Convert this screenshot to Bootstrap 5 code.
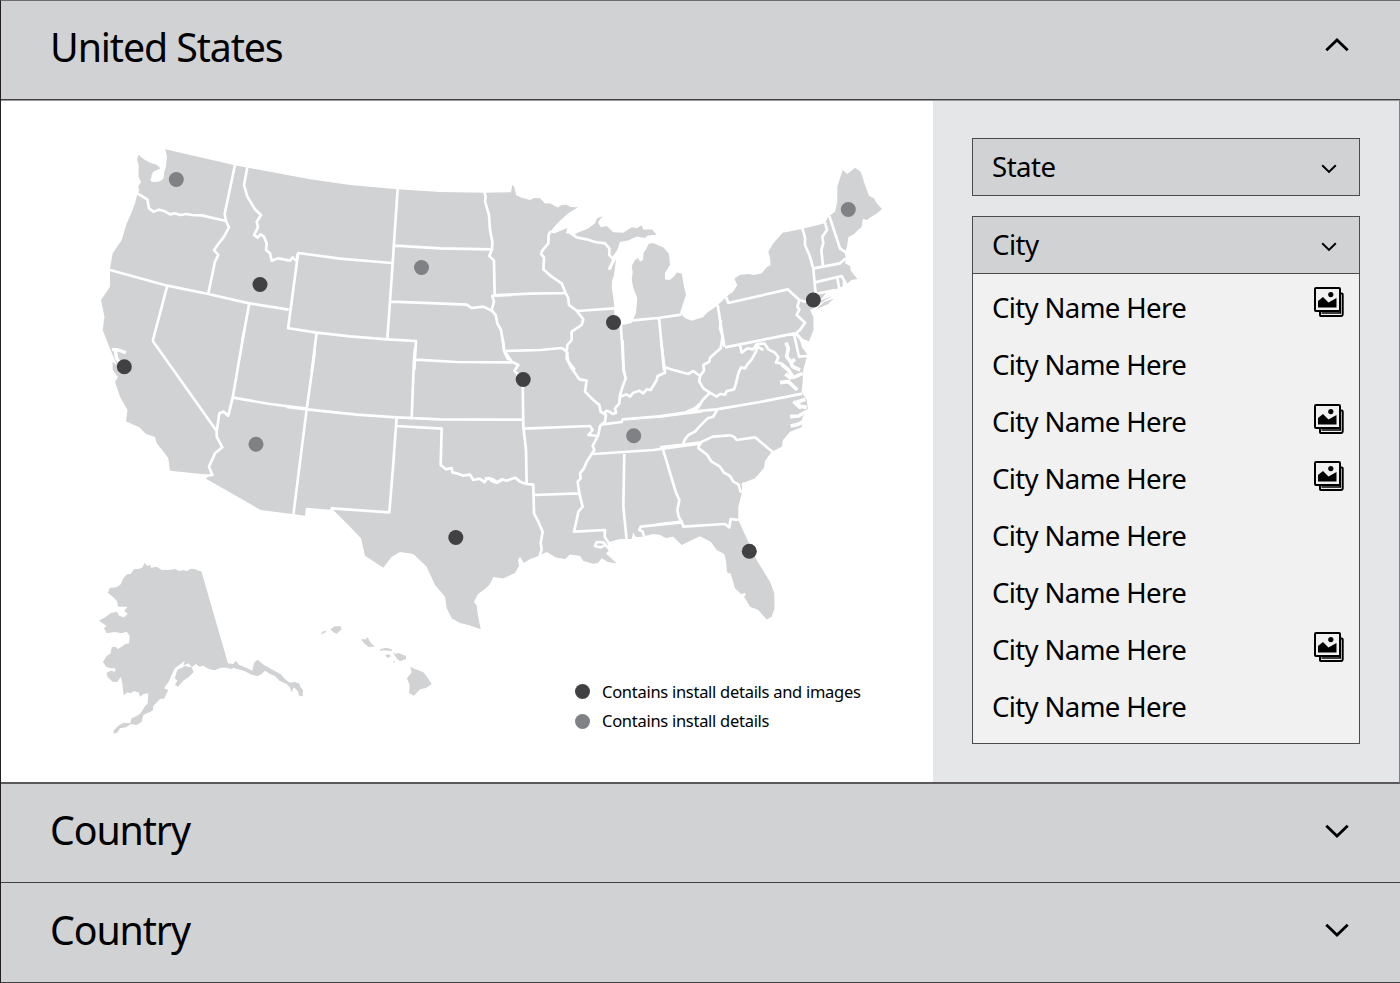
<!DOCTYPE html>
<html lang="en">
<head>
<meta charset="utf-8">
<meta name="viewport" content="width=device-width, initial-scale=1">
<title>Install locations</title>
<link href="https://cdn.jsdelivr.net/npm/bootstrap@5.3.0/dist/css/bootstrap.min.css" rel="stylesheet">
<style>
  body { font-family: "Noto Sans", "Open Sans", sans-serif; color: #000; background: #fff; }
  .locations { width: 1400px; height: 983px; border-left: 1px solid #231f20; border-top: 1px solid #6d6c6f; overflow: hidden; }
  .country-bar { background: #d1d2d4; height: 99px; padding: 0 51px 4px 49px; border: 0; border-bottom: 1px solid #414042; color: #000; text-align: left; flex: none; }
  .country-bar:last-child { height: 100px; }
  .country-bar.open-bar { padding-bottom: 5px; }
  .country-bar svg { margin-top: -1px; }
  .country-bar.open-bar svg { margin-top: -5px; }
  .country-name { font-size: 39.3px; letter-spacing: -1.1px; line-height: 1; }
  .detail { height: 684px; border-top: 1px solid #9a999c; border-bottom: 2px solid #5b595c; border-right: 1px solid #808184; }
  .map-pane { width: 932px; flex: none; }
  .legend { left: 574px; top: 576px; font-size: 16.5px; letter-spacing: -.28px; line-height: 29.4px; }
  .dot { width: 15px; height: 15px; border-radius: 50%; margin-right: 12px; }
  .dot-full { background: #414042; }
  .dot-part { background: #808184; }
  .side { background: #e5e6e8; padding: 37px 39px 0 39px; }
  .pick { background: #d1d2d4; border: 1px solid #4d4b4e; height: 58px; padding: 0 22px 0 19px; font-size: 27.6px; letter-spacing: -.5px; line-height: 1; color: #000; }
  .pick svg { margin-top: 4px; }
  .pick-state { margin-bottom: 20px; }
  .cities { background: #f1f1f2; border: 1px solid #4d4b4e; border-top: 0; height: 470px; padding: 5px 14px 0 19px; font-size: 27.6px; letter-spacing: -.65px; line-height: 1; }
  .cities li { height: 57px; }
  .cities svg { margin-top: -5px; }
  .cities li:first-child svg { margin-top: -10px; }
</style>
</head>
<body>
<svg class="d-none">
  <symbol id="photos" viewBox="0 0 31 31">
    <path d="M6 25V28.3Q6 29 6.7 29H27.300Q28.700 29 28.700 27.600V7.500Q28.700 6.500 27.700 6.500H26" fill="none" stroke="#000" stroke-width="2"/>
    <path d="M7.500 25.200H25.500V23H27V26.800H7.500Z" fill="#000"/>
    <rect x="1" y="1" width="25" height="23" rx="1" fill="#f1f1f2" stroke="#000" stroke-width="2"/>
    <path d="M4 20.500V14L9 10L14.500 15.500L22.500 11V20.500Z" fill="#000"/>
    <circle cx="16.800" cy="7.600" r="2.600" fill="#000"/>
  </symbol>
  <symbol id="chev" viewBox="0 0 24 14"><path d="M1.300 1.700L12 12L22.700 1.700" fill="none" stroke="#000" stroke-width="2.800"/></symbol>
  <symbol id="chev-s" viewBox="0 0 16 10"><path d="M1.200 1.300L8 7.900L14.800 1.300" fill="none" stroke="#000" stroke-width="2"/></symbol>
</svg>

<main class="locations d-flex flex-column">
  <button class="country-bar open-bar d-flex align-items-center justify-content-between">
    <span class="country-name">United States</span>
    <svg width="24" height="14" style="transform:rotate(180deg)"><use href="#chev"/></svg>
  </button>

  <section class="detail d-flex">
    <div class="map-pane position-relative">
      <svg class="d-block" width="931" height="681" viewBox="1 101 931 681">
        <!-- mainland -->
        <path fill="#d1d2d4" d="M138.500 154.500L141 157 145 160 151 163 157 165 160 168 163 167 159 171 154 172 153 175 150 180 154 182 160 181 163 179 164 173 166 166 167 157 165.300 149.300 235 165.300 310 179.300 350 185 397.700 189.300 440 192 485 192.700 511 192.300 512.300 184.700 514.300 187 516 195 521 197.500 530 200 534 198 540 198.300 545 203.500 550 203.300 557.700 207.500 562 205 566.700 204.700 571 207 578 207.300 568.300 213.300 560 220.700 555 226 550 232 554 233.500 560 231 567.300 228 566 233.300 575 234 580 231.700 588.300 228.500 595 223.300 597 218.500 602.700 216 598 222.300 600.700 227.300 606.700 226 613.300 232.300 623.300 232.700 631.700 227.300 637 228 641.700 225.300 643.300 229.500 652 229.500 656.700 234.700 648 235.500 645 238 636.700 236.500 628 240.500 620 241.700 617.300 250 613 256 611 262 607.500 269 610.500 270.500 616 259 614 275 612 281 611.700 288 613.300 297 614.300 307 614.300 317 623 325 631.700 323 636 313 637.300 298 633.300 288 631.700 280 632.700 272 631.700 266 635 260 638 258 640 261.500 643 260 643.500 253 646.700 248 648.500 244 653 243 663.500 247.500 669 254 670 265 665 273 665 279.500 669.500 280 673.500 277 677 272.500 681.700 273.500 684 286.700 686 295 683.300 303 680 313 685 318 691.700 320.700 703 317.300 707 312.700 716.700 306 728.300 295 733 292 737.300 285 734.300 278.500 740 275 748.300 274 754 275 761.700 273.300 766.700 267.300 770.700 265 770 258.300 768.300 251.700 773.300 243.300 782.700 232.700 801.700 229 825 223.300 828 217 835 211.700 837.300 201.700 837.300 186.700 842.700 170 847.300 174 855 167.700 860.700 171.700 865 185 869 195.700 874 198.300 876.700 203.300 882 209 876.700 213.500 870 217.700 867 220 863 219 861.500 227 857 231 854 234 848.300 237.300 847 246.700 844.700 253.300 846 258 845 263.300 850 266 851 270.700 854 275 857.500 279 851.700 280 846.700 284 840 287.700 827 292 822 298 833 294 829 298 820 303 816 307 810 310 813.300 316.700 813.500 330 809 341.500 801.700 338.300 797.500 334 800 341 806.700 351.700 806.700 356.700 803.300 370 802.700 381.700 801.700 391.700 806.700 400 808 410 802 418 801.700 427.300 790 431.700 783 440 781.700 446.700 771.700 451.700 765 461 764 468 755 478.300 748 481 742.300 483.300 741.700 493.300 738.300 506.700 738.300 520 748.300 541.700 756.700 560 770 581.700 774.300 593.300 774.500 608.300 771.700 616.700 766.700 619.500 758.300 610 750 606.700 745 598 740 593 735 588.300 731.700 576.700 727 572 726 560 724 554 716.700 550 711 542 700 536.300 692 540 681.700 545 673.300 536.700 666 538 660 535 653 534 641.700 536.700 636 537 633 532.500 631.700 539 620 539 610 541.700 606.700 546.700 609.300 550 606 553.500 611 558 616.700 563.500 608 562 601.700 558.300 598 563 593.300 563.700 583.300 561 580 556 570 554.500 565 559 556 557.500 546.700 552 538.300 556 530 559 524 563 520 557 518 560 519 566 515 573 503.300 578.500 493.300 577 490 584 485 589 478 594 474 602 477 606 477.500 613.300 480.700 629.300 470 625.500 460 623 451.700 618.300 446.700 608.300 445 596.700 435 585 426.700 566.700 413.300 554 400 552 391.700 556.700 383.300 567.700 365 555.700 361 538.300 350 526.700 333.300 510 306 507.700 305 515.700 290 513.700 260.700 510 206 478.700 209 474.700 170 470.700 168.300 458.300 163 451 156.700 443.300 155 437 146 434 139.300 427.300 132 424 126 421.300 127.500 410 120 396.700 115 381.700 118 377 112.700 370 112.500 362 117 365 114 358 109.300 347 102.700 330 104.500 317 101 300 110 286.700 110 268.300 112.700 253.300 121.700 240 126.700 223.300 131 214 135 203.300 137 195 139.500 190 138 187 141 182 138.500 176.700 138.700 165 137 160Z"/>
        <g fill="none" stroke="#fff" stroke-width="8" stroke-linejoin="round">
          <!-- northwest -->
          <g transform="translate(90 140) scale(.33333)">
            <path d="M218 72L214 88 192 99 188 108 200 114 188 122 208 120 217 112 215 92"/>
            <path d="M138 158L155 168 172 178 177 205 190 215 207 209 225 214 240 223 255 220 270 225 290 222 305 225 335 226 408 243M435 74L404 222 408 243 417 262 402 290 385 312 372 330 385 345 375 365 355 460M60 390L232 437 355 462 478 490 596 509M232 437L188 603M478 490L457 603M472 82L462 135 472 170 495 208 513 225 500 245 504 262 492 285 503 293 512 283 522 290 530 310 528 330 540 340 545 362 565 355 585 359 600 362 608 352 618 362M624 342L594 567"/>
          </g>
          <!-- northern plains -->
          <g transform="translate(290 170) scale(.33333)">
            <path d="M20 262L25 249 150 266 305 279M323 56L308 280 292 507M-9 474L80 488 180 499 292 508 378 513 373 600M80 488L65 605M315 227L450 235 606 238M302 395L440 400 530 404 545 414 580 410 605 422 617 435M583 66L587 80 585 95 597 135 600 180 607 215 606 238 598 258 612 272 614 375 607 378 612 395 605 420 617 435 622 460 633 480 638 510 643 545 655 570M376 569L500 576 665 577M612 376L665 375"/>
          </g>
          <!-- great lakes -->
          <g transform="translate(480 170) scale(.33333)">
            <path d="M44 376L150 371 257 369M212 183L206 195 205 220 188 240 183 252 192 262 190 298 215 320 245 340 257 369 265 385 267 405 290 422 310 448 305 465 275 485 275 510 262 525 260 545 265 575 285 600M270 188L290 202 320 208 345 216 375 220 388 235 388 255 397 265M290 423L404 415M78 543L180 540 245 534 260 545M422 460L432 610M450 452L535 444 603 434M537 444L552 600"/>
          </g>
          <!-- northeast -->
          <g transform="translate(680 150) scale(.33333)">
            <path d="M138 440L145 459 323 418 345 438 358 450 375 455 395 450M367 235L375 262 375 285 388 315 400 355 403 390 407 430M435 218L441 240 427 260 430 280 424 300 429 348M448 198L480 295 498 308M402 355L480 340 498 325M405 397L485 378 500 405M472 383L478 418M492 395V408M358 450L352 470 358 478 350 495 375 518 360 540 345 552M113 465L133 590M405 432L465 420"/>
            <path stroke-width="5" d="M408 455L462 432M405 482L450 462"/>
          </g>
          <!-- southwest -->
          <g transform="translate(90 330) scale(.33333)">
            <path d="M430 203L540 222 650 236M463 0L428 203 415 257 400 245 388 250 380 305 380 320 397 352 375 370 357 410 367 435 345 438M188 32L380 303"/>
            <path stroke-width="10" d="M66 58L85 60 108 68M76 62L80 85 88 98"/>
          </g>
          <!-- texas and its neighbours -->
          <g transform="translate(290 350) scale(.33333)">
            <path d="M75 0L50 178 10 495M375 -5L372 30 365 202M-10 171L50 178 200 194 320 202 450 208 700 209M320 202L318 228 310 340 298 487 125 475V484M318 228L455 236 452 345 468 358 485 354 487 367 500 370 520 377 540 374 550 390 568 386 584 396 592 385 608 387 622 398 640 387"/>
          </g>
          <!-- mississippi and the gulf -->
          <g transform="translate(480 340) scale(.33333)">
            <path d="M68 -5L72 30 95 65 115 75 103 92 128 120 130 260 138 330 140 430M14 416L28 414 33 422 50 428 65 418 80 422 105 413 120 425 140 432 160 434 162 520 175 545 188 575 182 610 185 628 178 652M132 266L330 258 338 270 325 285 355 288M262 35L260 55 275 85 298 118 320 122 315 155 340 180 358 195 362 215 378 225 375 245 360 258 355 285 338 318 343 330 320 365 312 385 300 400 302 415 293 425 298 460 308 500 295 515 290 540 282 575 375 570 374 590 388 612M370 222L380 212 390 216 398 222 408 218 405 205 418 190 420 165 428 140 437 115 430 85 428 0M362 254L425 246 428 238 540 229 665 214M340 342L520 330 665 310M162 465L298 460M433 335L430 500 440 600M492 588L488 575 478 570 482 560 605 547M420 170L440 163 450 170 460 158 478 152 490 160 500 148 512 150 530 120 533 108 555 98 543 0M620 215L645 205 660 190"/>
            <path d="M390 630L370 607 350 606 345 618 362 622 378 614"/>
          </g>
          <!-- atlantic coast -->
          <g transform="translate(660 320) scale(.33333)">
            <path d="M195 82L405 40M183 0L180 25 188 50 182 85 165 100 150 113 148 125 130 135 132 152 120 168M15 142L40 150 60 155 85 162 100 153 120 168 118 185 130 205 150 218 170 230 180 222 195 224 200 213 222 208 228 190 235 160 243 142 255 145 262 133 275 118 288 95 292 80 310 90M150 218L128 240 115 262 95 275M240 75L245 98 262 85 280 88 290 73 312 70M312 68L325 88 345 98 355 112 348 128 365 130M402 42L417 110 442 108M-5 290L95 275 170 268 300 246 427 221M172 268L160 290 143 295 130 308 118 320 105 335 85 345 75 358 68 375M0 382L120 368 158 350 210 346 222 350 230 360 285 352 337 395M120 368L115 384 140 403 155 425 180 440 192 458 210 468 220 485 235 493 243 518M8 385L48 518 58 540 52 570 56 590 65 605 70 620 195 612 208 622 212 597 235 600M-10 614L65 605"/>
            <path stroke-width="11" d="M378 68L385 85 380 110 392 125 398 140 420 150M395 125L405 118M364 132L385 150 400 172 428 160M360 188L385 185 412 210M376 162L395 176M400 244L420 262 412 246 436 238M390 290L415 288 445 272M392 318L412 314 430 305M418 258L440 262"/>
            <path stroke-width="9" d="M408 40L425 60 430 80 445 100M245 828L256 822M200 768L212 762M246 490L262 502"/>
          </g>
        </g>
        <path fill="#d1d2d4" d="M818 307.500L824 302 834 298.500 828 304 817 309Z"/>
        <!-- alaska and hawaii -->
        <g transform="translate(90 550) scale(.33333)" fill="#d1d2d4">
          <path d="M60 113L80 112 92 103 100 85 112 72 122 72 132 58 148 56 158 52 163 39 172 48 182 45 183 53 200 50 215 60 235 60 255 57 268 63 282 60 290 64 302 56 315 57 325 62 334 64 414 340 430 342 437 332 447 344 470 354 487 362 492 338 503 329 522 345 545 358 572 373 588 390 600 398 615 396 629 401 631 411 639 420 638 439 628 438 624 424 612 412 604 427 600 412 590 402 568 392 555 378 540 372 525 362 515 372 503 379 485 374 465 364 442 357 432 354 422 357 410 353 392 353 375 361 358 358 340 347 328 350 318 342 306 352 295 340 280 347 284 332 268 345 255 355 245 375 236 395 222 415 235 420 222 446 210 447 190 468 188 482 160 495 155 515 140 525 122 522 108 532 90 535 82 548 70 551 72 540 88 525 102 518 120 520 125 505 140 498 152 490 163 472 173 460 175 430 160 432 150 440 146 427 132 424 122 430 112 427 101 436 97 400 92 380 82 396 68 395 52 380 50 368 62 362 75 365 76 355 62 355 48 350 39 335 50 318 62 310 65 292 78 290 82 298 95 290 105 283 117 280 119 258 110 245 95 250 75 246 50 250 42 235 50 228 27 212 45 202 62 190 80 185 88 198 102 202 113 192 103 183 112 170 85 170 80 152 70 142 53 128Z"/>
          <path d="M262 360L285 348 305 352 311 366 295 382 280 392 264 410 255 405 262 392 254 385Z"/>
          <path d="M692 254L697 245 707 242 708 246ZM721 238L735 229 752 229 755 238 740 251 730 247ZM813 268L828 268 833 261 840 275 854 290 835 290 822 280ZM871 297L890 293 907 299 905 303 880 301 871 303ZM885 315L897 313 903 319 893 324ZM908 307L917 312 925 309 948 318 948 327 930 334 920 325ZM908 335L914 333 914 339ZM961 351L975 357 1000 367 1012 382 1025 403 1008 414 990 418 972 437 957 429 959 405 951 385 965 367Z"/>
        </g>
        <!-- install sites -->
        <g fill="#414042">
          <circle cx="260" cy="284.500" r="7.500"/><circle cx="124.300" cy="366.700" r="7.500"/><circle cx="613.500" cy="322.500" r="7.500"/><circle cx="813.300" cy="300" r="7.500"/><circle cx="523.200" cy="379.500" r="7.500"/><circle cx="455.800" cy="537.500" r="7.500"/><circle cx="749.300" cy="551.200" r="7.500"/>
        </g>
        <g fill="#808184">
          <circle cx="176.300" cy="179.500" r="7.500"/><circle cx="421.500" cy="267.500" r="7.500"/><circle cx="848.300" cy="209.500" r="7.500"/><circle cx="256" cy="444.300" r="7.500"/><circle cx="633.700" cy="435.700" r="7.500"/>
        </g>
      </svg>
      <div class="legend position-absolute">
        <div class="d-flex align-items-center"><span class="dot dot-full"></span>Contains install details and images</div>
        <div class="d-flex align-items-center"><span class="dot dot-part"></span>Contains install details</div>
      </div>
    </div>

    <aside class="side flex-grow-1">
      <div class="pick pick-state d-flex align-items-center justify-content-between"><span>State</span><svg width="16" height="10"><use href="#chev-s"/></svg></div>
      <div class="pick d-flex align-items-center justify-content-between"><span>City</span><svg width="16" height="10"><use href="#chev-s"/></svg></div>
      <ul class="cities list-unstyled mb-0">
        <li class="d-flex align-items-center justify-content-between">City Name Here<svg width="31" height="31"><use href="#photos"/></svg></li>
        <li class="d-flex align-items-center">City Name Here</li>
        <li class="d-flex align-items-center justify-content-between">City Name Here<svg width="31" height="31"><use href="#photos"/></svg></li>
        <li class="d-flex align-items-center justify-content-between">City Name Here<svg width="31" height="31"><use href="#photos"/></svg></li>
        <li class="d-flex align-items-center">City Name Here</li>
        <li class="d-flex align-items-center">City Name Here</li>
        <li class="d-flex align-items-center justify-content-between">City Name Here<svg width="31" height="31"><use href="#photos"/></svg></li>
        <li class="d-flex align-items-center">City Name Here</li>
      </ul>
    </aside>
  </section>

  <button class="country-bar d-flex align-items-center justify-content-between">
    <span class="country-name">Country</span><svg width="24" height="14"><use href="#chev"/></svg>
  </button>
  <button class="country-bar d-flex align-items-center justify-content-between">
    <span class="country-name">Country</span><svg width="24" height="14"><use href="#chev"/></svg>
  </button>
</main>
<script src="https://cdn.jsdelivr.net/npm/bootstrap@5.3.0/dist/js/bootstrap.bundle.min.js"></script>
</body>
</html>
